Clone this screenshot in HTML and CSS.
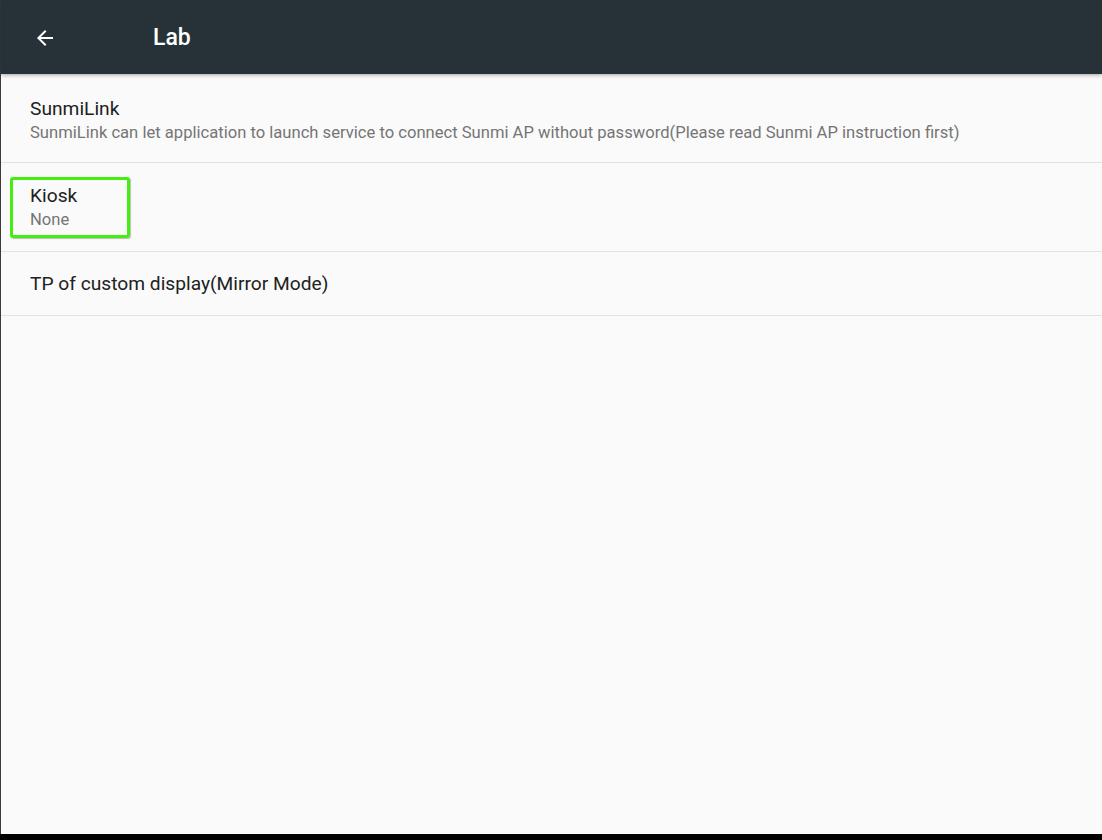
FILE: index.html
```html
<!DOCTYPE html>
<html lang="en">
<head>
  <meta charset="UTF-8" />
  <title>Lab</title>
  <link rel="stylesheet" href="styles.css">
</head>
<body>
  <div class="screen">
    <div class="toolbar">
      <svg class="back" viewBox="0 0 24 24" width="24" height="24">
        <path d="M20 11H7.83l5.59-5.59L12 4l-8 8 8 8 1.41-1.41L7.83 13H20v-2z" fill="#fff"/>
      </svg>
      <span class="title">Lab</span>
    </div>

    <div class="list">
      <div class="item first">
        <div class="item-title">SunmiLink</div>
        <div class="item-sub">SunmiLink can let application to launch service to connect Sunmi AP without password(Please read Sunmi AP instruction first)</div>
      </div>
      <div class="item kiosk-row">
        <div class="focus">
          <div class="item-title">Kiosk</div>
          <div class="item-sub">None</div>
        </div>
      </div>
      <div class="item single">
        <div class="item-title">TP of custom display(Mirror Mode)</div>
      </div>
    </div>
  </div>
  <div class="navbar"></div>
</body>
</html>
```

FILE: styles.css
```css
html, body {
  margin: 0;
  height: 100%;
  background: #000;
}
body {
  font-family: Roboto, "Noto Sans", sans-serif;
  display: flex;
  flex-direction: column;
}
.screen {
  height: 834px;
  background: #fafafa;
  border-left: 1px solid #3a3a3a;
  box-sizing: border-box;
  display: flex;
  flex-direction: column;
}
.toolbar {
  height: 74px;
  flex: none;
  background: #263238;
  display: flex;
  align-items: center;
  box-shadow: 0 1px 4px rgba(0,0,0,0.35);
  position: relative;
  z-index: 1;
}
.back {
  margin-left: 32px;
  margin-top: 1px;
}
.title {
  color: #fff;
  font-size: 23px;
  font-weight: 500;
  margin-left: 96px;
  margin-top: 1px;
}
.list {
  flex: 1;
}
.item {
  border-bottom: 1px solid #e2e2e2;
  padding: 0 29px;
  display: flex;
  flex-direction: column;
  justify-content: center;
}
.item.first {
  height: 84px;
  padding-top: 4px;
}
.item.kiosk-row {
  height: 88px;
  padding: 0 0 0 9px;
}
.item.single {
  height: 63px;
}
.item-title {
  font-size: 19.2px;
  color: #212121;
  line-height: 25px;
}
.item-sub {
  font-size: 16.6px;
  color: #757575;
  line-height: 24px;
}
.focus {
  width: 97px;
  height: 55px;
  border: 3px solid #44ee11;
  border-radius: 3px;
  padding-left: 17px;
  box-sizing: content-box;
  display: flex;
  flex-direction: column;
  justify-content: center;
  box-shadow: 1px 1px 1px rgba(0,0,0,0.25);
}
.focus .item-sub {
  line-height: 24px;
}
.navbar {
  flex: 1;
  background: #000;
}
```
